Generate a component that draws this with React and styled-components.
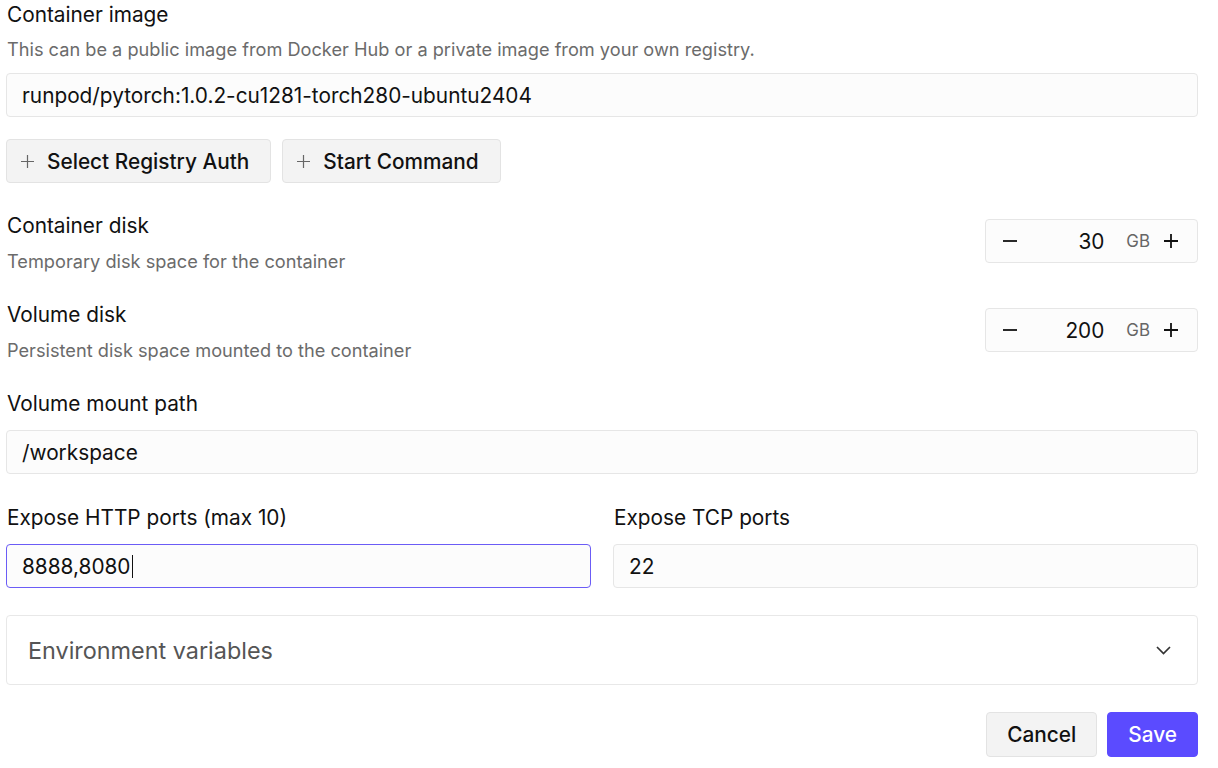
import React from "react";
import styled, { createGlobalStyle } from "styled-components";

const GlobalStyle = createGlobalStyle`
  html, body {
    margin: 0;
    padding: 0;
    background: #ffffff;
  }
  body {
    font-family: Inter, "Noto Sans", sans-serif;
    color: #111111;
    -webkit-font-smoothing: antialiased;
  }
`;

const Page = styled.div`
  width: 1192px;
  padding: 2px 20px 12px 6px;
  display: flex;
  flex-direction: column;
`;

const Label = styled.div`
  font-size: 20.8px;
  line-height: 26px;
  padding-left: 1px;
  margin-top: ${p => p.$top || 0}px;
  color: #111;
`;

const Hint = styled.div`
  font-size: 18.2px;
  line-height: 22px;
  margin-top: ${p => p.$top || 11}px;
  padding-left: 1px;
  color: #6b6b6b;
`;

const TextInput = styled.input`
  box-sizing: border-box;
  width: 100%;
  height: 44px;
  margin-top: ${p => p.$top || 0}px;
  padding: 0 15px;
  border: 1px solid #e6e6e6;
  border-radius: 4px;
  background: #fcfcfc;
  font-family: inherit;
  font-size: 20.8px;
  color: #111;
  outline: none;
`;

const FocusBox = styled.div`
  box-sizing: border-box;
  height: 44px;
  margin-top: ${p => p.$top || 0}px;
  padding: 0 15px;
  display: flex;
  align-items: center;
  border: 1px solid #6b5cf6;
  border-radius: 4px;
  background: #fcfcfc;
  font-size: 20.8px;
  color: #111;
`;

const Caret = styled.span`
  display: inline-block;
  width: 1px;
  height: 23px;
  margin-left: 1px;
  background: #111;
`;

const ButtonRow = styled.div`
  display: flex;
  gap: 11px;
  margin-top: 22px;
`;

const GhostButton = styled.button`
  box-sizing: border-box;
  height: 44px;
  padding: 0 21px 0 14px;
  display: flex;
  align-items: center;
  gap: 13px;
  border: 1px solid #e3e3e3;
  border-radius: 4px;
  background: #f3f3f3;
  font-family: inherit;
  font-size: 20.8px;
  font-weight: 500;
  color: #111;
  cursor: pointer;
`;

const DiskRow = styled.div`
  display: flex;
  justify-content: space-between;
  align-items: flex-start;
  margin-top: 30px;
`;

const DiskText = styled.div`
  display: flex;
  flex-direction: column;
`;

const Stepper = styled.div`
  box-sizing: border-box;
  width: 213px;
  height: 44px;
  margin-top: 6px;
  display: flex;
  align-items: center;
  padding: 0 19px 0 17px;
  border: 1px solid #e6e6e6;
  border-radius: 4px;
  background: #fcfcfc;
`;

const StepValue = styled.span`
  flex: 1;
  text-align: right;
  font-size: 20.8px;
  color: #111;
  padding-right: 22px;
`;

const Unit = styled.span`
  font-size: 16.9px;
  color: #666;
  margin-right: 14px;
`;

const IconBtn = styled.span`
  display: flex;
  align-items: center;
  justify-content: center;
  width: 14px;
  height: 16px;
  color: #111;
`;

const PortsGrid = styled.div`
  display: grid;
  grid-template-columns: 1fr 1fr;
  column-gap: 22px;
  margin-top: 31px;
`;

const PortField = styled.div`
  display: flex;
  flex-direction: column;
`;

const EnvBox = styled.div`
  box-sizing: border-box;
  height: 70px;
  margin-top: 27px;
  padding: 0 26px 0 21px;
  display: flex;
  align-items: center;
  justify-content: space-between;
  border: 1px solid #e8e8e8;
  border-radius: 4px;
  background: #fff;
  font-size: 23.4px;
  color: #555;
`;

const Footer = styled.div`
  display: flex;
  justify-content: flex-end;
  gap: 10px;
  margin-top: 27px;
`;

const FooterButton = styled.button`
  box-sizing: border-box;
  height: 45px;
  padding: 0 20px;
  border: 1px solid ${p => (p.$primary ? "#5b4bff" : "#e3e3e3")};
  border-radius: 4px;
  background: ${p => (p.$primary ? "#5b4bff" : "#f3f3f3")};
  font-family: inherit;
  font-size: 20.8px;
  font-weight: 500;
  color: ${p => (p.$primary ? "#fff" : "#111")};
  cursor: pointer;
`;

const Plus = ({ size = 14, color = "#111", w = 1.8 }) => (
  <svg width={size} height={size} viewBox="0 0 14 14" fill="none">
    <path d="M7 0v14M0 7h14" stroke={color} strokeWidth={w} />
  </svg>
);

const Minus = () => (
  <svg width="14" height="14" viewBox="0 0 14 14" fill="none">
    <path d="M0 7h14" stroke="#111" strokeWidth="1.8" />
  </svg>
);

const Chevron = () => (
  <svg width="15" height="9" viewBox="0 0 15 9" fill="none">
    <path d="M1 1l6.5 6.5L14 1" stroke="#333" strokeWidth="1.7" />
  </svg>
);

const DiskField = ({ label, hint, value }) => (
  <DiskRow>
    <DiskText>
      <Label>{label}</Label>
      <Hint>{hint}</Hint>
    </DiskText>
    <Stepper>
      <IconBtn><Minus /></IconBtn>
      <StepValue>{value}</StepValue>
      <Unit>GB</Unit>
      <IconBtn><Plus /></IconBtn>
    </Stepper>
  </DiskRow>
);

export default function App() {
  return (
    <Page>
      <GlobalStyle />
      <Label>Container image</Label>
      <Hint $top={10}>This can be a public image from Docker Hub or a private image from your own registry.</Hint>
      <TextInput $top={13} defaultValue="runpod/pytorch:1.0.2-cu1281-torch280-ubuntu2404" />

      <ButtonRow>
        <GhostButton><Plus size={13} color="#666" w={1.3} />Select Registry Auth</GhostButton>
        <GhostButton><Plus size={13} color="#666" w={1.3} />Start Command</GhostButton>
      </ButtonRow>

      <DiskField label="Container disk" hint="Temporary disk space for the container" value="30" />
      <DiskField label="Volume disk" hint="Persistent disk space mounted to the container" value="200" />

      <Label $top={30}>Volume mount path</Label>
      <TextInput $top={13} defaultValue="/workspace" />

      <PortsGrid>
        <PortField>
          <Label>Expose HTTP ports (max 10)</Label>
          <FocusBox $top={13}>8888,8080<Caret /></FocusBox>
        </PortField>
        <PortField>
          <Label>Expose TCP ports</Label>
          <TextInput $top={13} defaultValue="22" />
        </PortField>
      </PortsGrid>

      <EnvBox>
        Environment variables
        <Chevron />
      </EnvBox>

      <Footer>
        <FooterButton>Cancel</FooterButton>
        <FooterButton $primary>Save</FooterButton>
      </Footer>
    </Page>
  );
}
